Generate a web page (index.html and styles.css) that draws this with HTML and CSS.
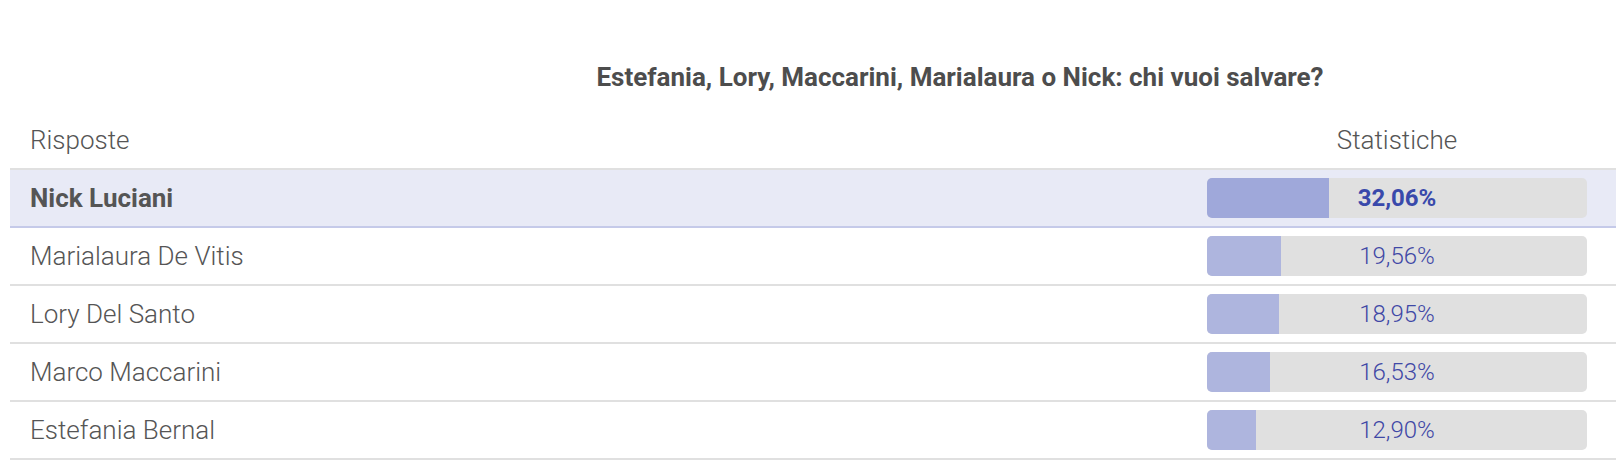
FILE: index.html
```html
<!DOCTYPE html>
<html lang="it">
<head>
<meta charset="utf-8">
<title>Sondaggio</title>
<link rel="stylesheet" href="styles.css">
</head>
<body>
<div class="poll">
  <h2 class="poll-title"><span class="poll-title-text">Estefania, Lory, Maccarini, Marialaura o Nick: chi vuoi salvare?</span></h2>
  <div class="poll-table">
    <div class="poll-row poll-head">
      <div class="cell-name">Risposte</div>
      <div class="cell-stats cell-stats-head">Statistiche</div>
    </div>
    <div class="poll-row is-top">
      <div class="cell-name">Nick Luciani</div>
      <div class="cell-stats"><div class="bar"><div class="bar-fill" style="width:32.06%"></div><span class="bar-label">32,06%</span></div></div>
    </div>
    <div class="poll-row">
      <div class="cell-name">Marialaura De Vitis</div>
      <div class="cell-stats"><div class="bar"><div class="bar-fill" style="width:19.56%"></div><span class="bar-label">19,56%</span></div></div>
    </div>
    <div class="poll-row">
      <div class="cell-name">Lory Del Santo</div>
      <div class="cell-stats"><div class="bar"><div class="bar-fill" style="width:18.95%"></div><span class="bar-label">18,95%</span></div></div>
    </div>
    <div class="poll-row">
      <div class="cell-name">Marco Maccarini</div>
      <div class="cell-stats"><div class="bar"><div class="bar-fill" style="width:16.53%"></div><span class="bar-label">16,53%</span></div></div>
    </div>
    <div class="poll-row">
      <div class="cell-name">Estefania Bernal</div>
      <div class="cell-stats"><div class="bar"><div class="bar-fill" style="width:12.90%"></div><span class="bar-label">12,90%</span></div></div>
    </div>
  </div>
</div>
</body>
</html>
```

FILE: styles.css
```css
html, body {
  margin: 0;
  padding: 0;
  background: #ffffff;
}

body {
  font-family: Roboto, "Liberation Sans", Arial, sans-serif;
  color: #555555;
}

.poll {
  padding: 62px 0 0 10px;
}

.poll-title {
  margin: 0 0 20px 0;
  padding-left: 294px;
  text-align: center;
  font-size: 26px;
  line-height: 30px;
  font-weight: 700;
  font-stretch: 95%;
  color: #4d4d4d;
}

.poll-title-text {
  display: inline-block;
}

.poll-table {
  display: flex;
  flex-direction: column;
}

.poll-row {
  display: flex;
  align-items: center;
  height: 58px;
  box-sizing: border-box;
  border-bottom: 2px solid #e0e0e0;
  font-size: 26px;
  font-weight: 300;
  color: #555555;
}

.poll-row.is-top {
  background: #e8eaf6;
  border-bottom-color: #c5cae9;
}

.poll-row.is-top .cell-name {
  font-weight: 700;
}

.cell-name {
  flex: 1;
  padding-left: 20px;
}

.cell-stats {
  width: 438px;
  box-sizing: border-box;
  padding: 0 29px;
}

.cell-stats-head {
  text-align: center;
}

.bar {
  position: relative;
  height: 40px;
  border-radius: 5px;
  background: #e0e0e0;
  overflow: hidden;
  display: flex;
  align-items: center;
  justify-content: center;
}

.bar-fill {
  position: absolute;
  left: 0;
  top: 0;
  bottom: 0;
  background: #aeb5de;
}

.is-top .bar-fill {
  background: #9fa8da;
}

.bar-label {
  position: relative;
  font-size: 24px;
  font-weight: 300;
  color: #3f48a6;
}

.is-top .bar-label {
  font-weight: 700;
  color: #3949ab;
}
```
